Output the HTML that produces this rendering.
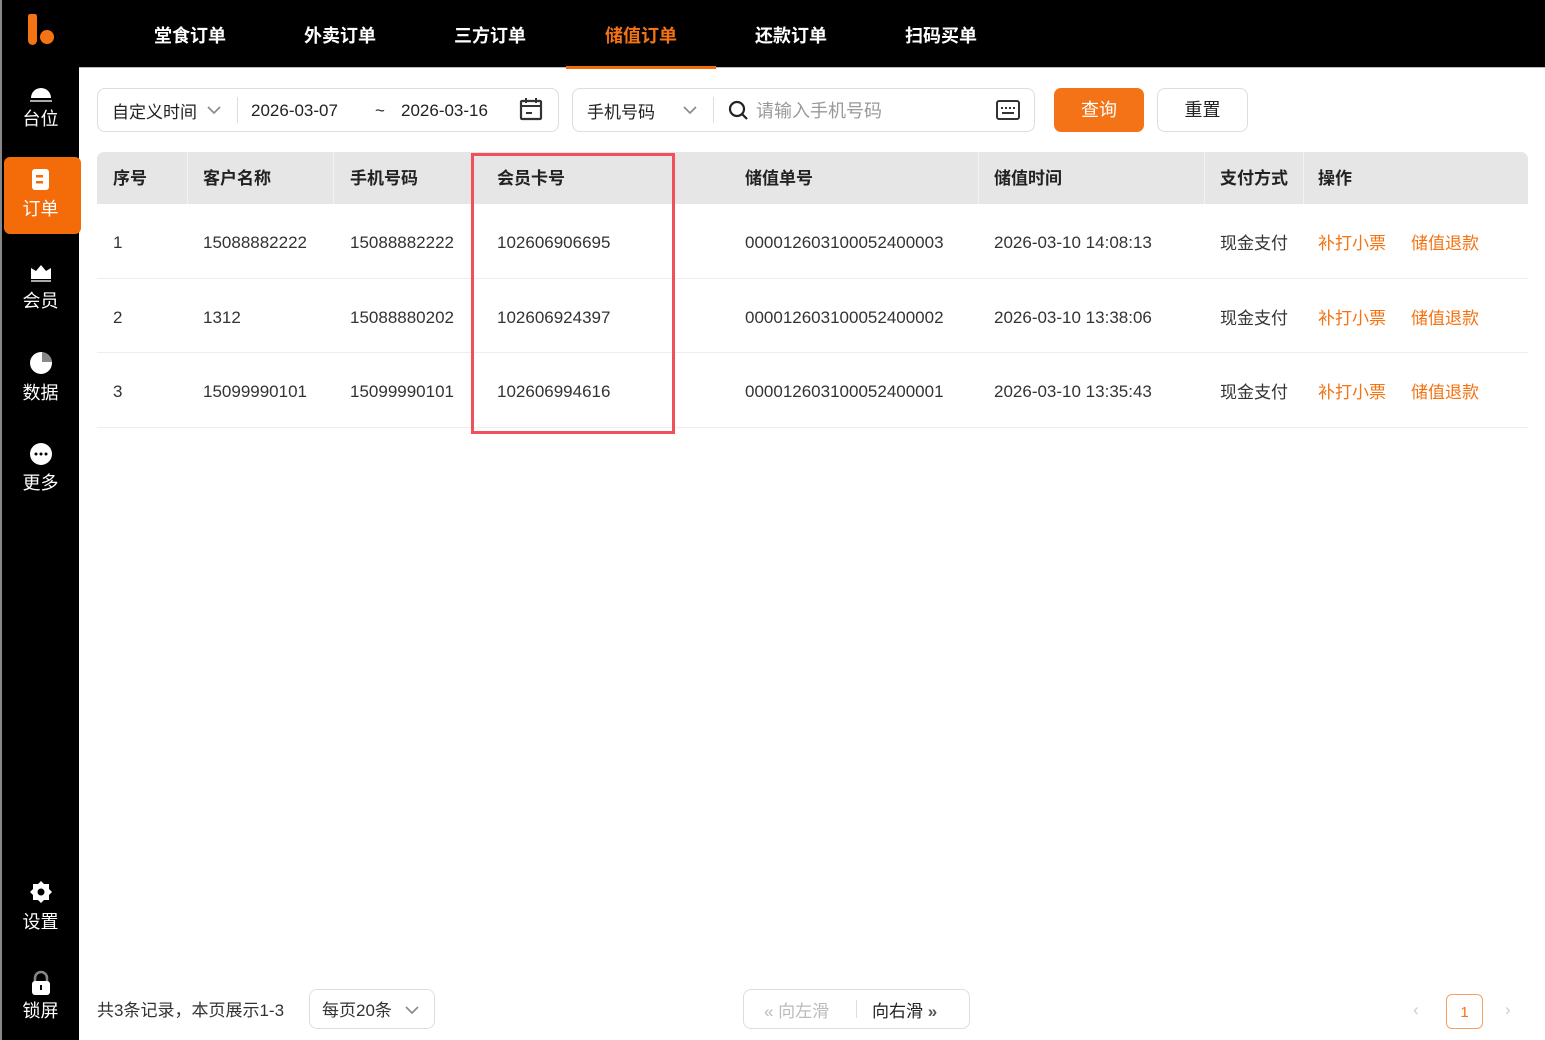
<!DOCTYPE html><html><head><meta charset="utf-8"><style>
*{margin:0;padding:0;box-sizing:border-box}
body{width:1545px;height:1040px;background:#fff;font-family:"Liberation Sans","Noto Sans CJK SC",sans-serif;position:relative;overflow:hidden;color:#222}
.a{position:absolute}
.side{left:0;top:0;width:79px;height:1040px;background:#000;border-left:2px solid #888}
.si{position:absolute;left:0;width:77px;text-align:center;color:#fff;font-size:18px}
.nav{left:79px;top:0;width:1466px;height:68px;background:#000;border-bottom:1px solid #bbb}
.nv{position:absolute;top:22px;color:#fff;font-weight:bold;font-size:18px;width:150px;text-align:center}
.box{border:1px solid #ddd;border-radius:8px;background:#fff}
.t{position:absolute;font-size:17px;color:#333;white-space:nowrap}
.h{font-weight:bold;color:#222}
.o{color:#f47312}
</style></head><body>
<div class="a side">
<div class="a" style="left:26px;top:14px;width:9px;height:31px;background:#f47312;border-radius:3px 3px 6px 6px"></div>
<div class="a" style="left:38px;top:30px;width:14px;height:14px;background:#f47312;border-radius:50%"></div>
<div class="si" style="top:82px"><svg width="26" height="22" viewBox="0 0 26 22"><path d="M3 16a10 10 0 0 1 20 0z" fill="#fff"/><rect x="2" y="18" width="22" height="2" fill="#aaa"/></svg><div style="margin-top:-4px">台位</div></div>
<div class="a" style="left:2px;top:157px;width:77px;height:77px;background:#f46c0a;border-radius:6px"></div>
<div class="si" style="top:168px"><svg width="24" height="24" viewBox="0 0 24 24"><rect x="3" y="1" width="17" height="21" rx="3" fill="#fff"/><rect x="7" y="7" width="7" height="2.5" fill="#f46c0a"/><rect x="7" y="13" width="7" height="2.5" fill="#f46c0a"/></svg><div style="margin-top:-2px">订单</div></div>
<div class="si" style="top:262px"><svg width="26" height="22" viewBox="0 0 26 22"><path d="M3 6l5 3 5-6 5 6 5-3v11H3z" fill="#fff"/><rect x="3" y="18" width="20" height="2" fill="#aaa"/></svg><div style="margin-top:-2px">会员</div></div>
<div class="si" style="top:351px"><svg width="26" height="24" viewBox="0 0 26 24"><circle cx="13" cy="12" r="11" fill="#fff"/><path d="M14 1a11 11 0 0 1 10 10H14z" fill="#888"/></svg><div style="margin-top:-1px">数据</div></div>
<div class="si" style="top:442px"><svg width="26" height="24" viewBox="0 0 26 24"><circle cx="13" cy="12" r="11" fill="#fff"/><circle cx="8" cy="12" r="1.5"/><circle cx="13" cy="12" r="1.5"/><circle cx="18" cy="12" r="1.5"/></svg><div style="margin-top:-2px">更多</div></div>
<div class="si" style="top:880px"><svg width="26" height="24" viewBox="0 0 26 24"><path d="M13 1l3 3h5v5l3 3-3 3v5h-5l-3 3-3-3H5v-5l-3-3 3-3V4h5z" fill="#fff"/><circle cx="13" cy="12" r="3.5"/></svg><div style="margin-top:-1px">设置</div></div>
<div class="si" style="top:970px"><svg width="26" height="26" viewBox="0 0 26 26"><path d="M7 12V8a6 6 0 0 1 12 0v4" stroke="#888" stroke-width="2.5" fill="none"/><rect x="4" y="11" width="18" height="14" rx="3" fill="#fff"/><rect x="12" y="15" width="2" height="5"/></svg><div style="margin-top:-4px">锁屏</div></div>
</div>
<div class="a nav">
<div class="nv" style="left:36px">堂食订单</div><div class="nv" style="left:186px">外卖订单</div><div class="nv" style="left:336px">三方订单</div><div class="nv" style="left:487px;color:#f47312">储值订单</div><div class="nv" style="left:637px">还款订单</div><div class="nv" style="left:787px">扫码买单</div>
<div class="a" style="left:487px;top:66px;width:150px;height:3px;background:#f46c0a"></div>
</div>
<div class="a box" style="left:97px;top:88px;width:462px;height:44px"></div>
<div class="t" style="left:112px;top:98px;color:#222">自定义时间</div>
<svg class="a" style="left:206px;top:104px" width="16" height="12"><path d="M2 3l6 6 6-6" stroke="#888" stroke-width="1.6" fill="none"/></svg>
<div class="a" style="left:237px;top:97px;width:1px;height:26px;background:#ddd"></div>
<div class="t" style="left:251px;top:101px;color:#222">2026-03-07</div>
<div class="t" style="left:375px;top:101px;color:#222">~</div>
<div class="t" style="left:401px;top:101px;color:#222">2026-03-16</div>
<svg class="a" style="left:519px;top:97px" width="24" height="24"><rect x="2" y="4" width="20" height="18" rx="1" stroke="#333" stroke-width="2.2" fill="none"/><rect x="2" y="8" width="20" height="2" fill="#333"/><rect x="6" y="1" width="2" height="5" fill="#333"/><rect x="16" y="1" width="2" height="5" fill="#333"/><rect x="7" y="15" width="6" height="2" fill="#333"/></svg>
<div class="a box" style="left:572px;top:88px;width:463px;height:44px"></div>
<div class="t" style="left:587px;top:98px;color:#222">手机号码</div>
<svg class="a" style="left:682px;top:104px" width="16" height="12"><path d="M2 3l6 6 6-6" stroke="#888" stroke-width="1.6" fill="none"/></svg>
<div class="a" style="left:713px;top:97px;width:1px;height:26px;background:#ddd"></div>
<svg class="a" style="left:728px;top:100px" width="22" height="22"><circle cx="9" cy="9" r="7" stroke="#222" stroke-width="2.2" fill="none"/><path d="M14 14l5 5" stroke="#222" stroke-width="2.2"/></svg>
<div class="t" style="left:756px;top:97px;color:#999;font-size:18px">请输入手机号码</div>
<svg class="a" style="left:996px;top:99px" width="24" height="22"><rect x="1" y="2" width="22" height="18" rx="2" stroke="#333" stroke-width="2" fill="none"/><path d="M5 9h2M9 9h2M13 9h2M17 9h2M6 14h12" stroke="#333" stroke-width="2"/></svg>
<div class="a" style="left:1054px;top:88px;width:90px;height:44px;background:#f57317;border-radius:7px;color:#fff;font-size:18px;text-align:center;line-height:44px">查询</div>
<div class="a box" style="left:1157px;top:88px;width:91px;height:44px;text-align:center;line-height:42px;font-size:18px;color:#222">重置</div>
<div class="a" style="left:97px;top:152px;width:1431px;height:52px;background:#e6e6e6;border-radius:7px 7px 0 0"></div>
<div class="a" style="left:187px;top:152px;width:1px;height:52px;background:#f2f2f2"></div>
<div class="a" style="left:333px;top:152px;width:1px;height:52px;background:#f2f2f2"></div>
<div class="a" style="left:978px;top:152px;width:1px;height:52px;background:#f2f2f2"></div>
<div class="a" style="left:1204px;top:152px;width:1px;height:52px;background:#f2f2f2"></div>
<div class="a" style="left:1303px;top:152px;width:1px;height:52px;background:#f2f2f2"></div>
<div class="t h" style="left:113px;top:164px">序号</div><div class="t h" style="left:203px;top:164px">客户名称</div><div class="t h" style="left:350px;top:164px">手机号码</div><div class="t h" style="left:497px;top:164px">会员卡号</div><div class="t h" style="left:745px;top:164px">储值单号</div><div class="t h" style="left:994px;top:164px">储值时间</div><div class="t h" style="left:1220px;top:164px">支付方式</div><div class="t h" style="left:1318px;top:164px">操作</div>
<div class="a" style="left:97px;top:278px;width:1431px;height:1px;background:#eee"></div>
<div class="a" style="left:97px;top:352px;width:1431px;height:1px;background:#eee"></div>
<div class="a" style="left:97px;top:427px;width:1431px;height:1px;background:#eee"></div>
<div class="t" style="left:113px;top:233px">1</div><div class="t" style="left:203px;top:233px">15088882222</div><div class="t" style="left:350px;top:233px">15088882222</div><div class="t" style="left:497px;top:233px">102606906695</div><div class="t" style="left:745px;top:233px">000012603100052400003</div><div class="t" style="left:994px;top:233px">2026-03-10 14:08:13</div><div class="t" style="left:1220px;top:229px">现金支付</div><div class="t o" style="left:1318px;top:229px">补打小票</div><div class="t o" style="left:1411px;top:229px">储值退款</div>
<div class="t" style="left:113px;top:308px">2</div><div class="t" style="left:203px;top:308px">1312</div><div class="t" style="left:350px;top:308px">15088880202</div><div class="t" style="left:497px;top:308px">102606924397</div><div class="t" style="left:745px;top:308px">000012603100052400002</div><div class="t" style="left:994px;top:308px">2026-03-10 13:38:06</div><div class="t" style="left:1220px;top:304px">现金支付</div><div class="t o" style="left:1318px;top:304px">补打小票</div><div class="t o" style="left:1411px;top:304px">储值退款</div>
<div class="t" style="left:113px;top:382px">3</div><div class="t" style="left:203px;top:382px">15099990101</div><div class="t" style="left:350px;top:382px">15099990101</div><div class="t" style="left:497px;top:382px">102606994616</div><div class="t" style="left:745px;top:382px">000012603100052400001</div><div class="t" style="left:994px;top:382px">2026-03-10 13:35:43</div><div class="t" style="left:1220px;top:378px">现金支付</div><div class="t o" style="left:1318px;top:378px">补打小票</div><div class="t o" style="left:1411px;top:378px">储值退款</div>
<div class="a" style="left:471px;top:153px;width:204px;height:281px;border:3px solid #f0505a"></div>
<div class="t" style="left:97px;top:996px">共3条记录，本页展示1-3</div>
<div class="a box" style="left:309px;top:989px;width:126px;height:40px"></div>
<div class="t" style="left:322px;top:996px">每页20条</div>
<svg class="a" style="left:404px;top:1004px" width="16" height="12"><path d="M2 3l6 6 6-6" stroke="#888" stroke-width="1.6" fill="none"/></svg>
<div class="a box" style="left:743px;top:989px;width:227px;height:40px"></div>
<div class="t" style="left:764px;top:997px;color:#bbb">« 向左滑</div>
<div class="a" style="left:856px;top:1000px;width:1px;height:18px;background:#ddd"></div>
<div class="t" style="left:872px;top:997px;color:#222">向右滑 <b style="color:#555">»</b></div>
<div class="t" style="left:1413px;top:1000px;color:#ccc">‹</div>
<div class="a" style="left:1446px;top:994px;width:37px;height:35px;border:1px solid #f5a062;border-radius:6px;text-align:center;line-height:35px;color:#f47312;font-size:15px">1</div>
<div class="t" style="left:1505px;top:1000px;color:#ccc">›</div>
</body></html>
